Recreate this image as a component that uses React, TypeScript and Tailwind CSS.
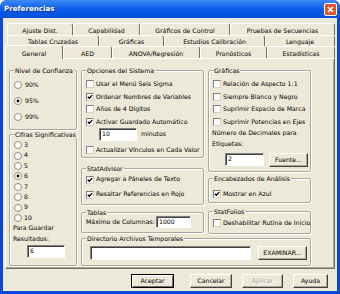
import React from "react";

type TabDef = { label: string; w: string; active?: boolean };

const row1: TabDef[] = [
  { label: "Ajuste Dist.", w: "w-[66px]" },
  { label: "Capabilidad", w: "w-[67px]" },
  { label: "Gráficos de Control", w: "w-[90px]" },
  { label: "Pruebas de Secuencias", w: "w-[105px]" },
];
const row2: TabDef[] = [
  { label: "Tablas Cruzadas", w: "w-[92px]" },
  { label: "Gráficas", w: "w-[65px]" },
  { label: "Estudios Calibración", w: "w-[101px]" },
  { label: "Lenguaje", w: "w-[70px]" },
];
const row3: TabDef[] = [
  { label: "General", w: "w-[58px]", active: true },
  { label: "AED", w: "w-[49px]" },
  { label: "ANOVA/Regresión", w: "w-[88px]" },
  { label: "Pronósticos", w: "w-[67px]" },
  { label: "Estadísticas", w: "w-[68px]" },
];

function Tab({ t }: { t: TabDef }) {
  return (
    <div
      className={`${t.w} flex items-center justify-center pt-[3px] whitespace-nowrap leading-none bg-[#ece9d8] border-t border-l border-white border-r border-r-[#716f64] rounded-t-[3px] ${
        t.active ? "h-[14px] -mb-[1px] relative z-10" : "h-full"
      }`}
    >
      {t.label}
    </div>
  );
}

function Radio({ on }: { on?: boolean }) {
  return (
    <svg width="8" height="8" viewBox="0 0 8 8" className="shrink-0">
      <circle cx="4" cy="4" r="3.5" fill="#fff" stroke="#8d8b80" />
      {on && <circle cx="4" cy="4" r="1.4" fill="#000" />}
    </svg>
  );
}

function Box({ on }: { on?: boolean }) {
  return (
    <span className="relative w-[8px] h-[8px] shrink-0 bg-white border border-t-[#808080] border-l-[#808080] border-r-[#d4d0c8] border-b-[#d4d0c8]">
      {on && (
        <svg className="absolute inset-0" width="6" height="6" viewBox="0 0 6 6">
          <path d="M0.8 2.7 L2.3 4.3 L5.2 1.1" stroke="#000" strokeWidth="1.3" fill="none" />
        </svg>
      )}
    </span>
  );
}

function Opt({ label, on, h = "h-[12.5px]" }: { label: string; on?: boolean; h?: string }) {
  return (
    <div className={`flex items-center gap-[2px] ${h}`}>
      <Box on={on} />
      <span className="whitespace-nowrap leading-none">{label}</span>
    </div>
  );
}

function Field({ value, className }: { value?: string; className: string }) {
  return (
    <div
      className={`bg-white flex items-center pl-[2px] leading-none border border-t-[#808080] border-l-[#808080] border-r-white border-b-white shadow-[inset_1px_1px_0_#404040] ${className}`}
    >
      {value}
    </div>
  );
}

function Btn({
  label,
  className,
  isDefault,
  disabled,
}: {
  label: string;
  className: string;
  isDefault?: boolean;
  disabled?: boolean;
}) {
  return (
    <button
      type="button"
      className={`flex items-center justify-center leading-none bg-[#ece9d8] border ${
        isDefault
          ? "border-black shadow-[inset_1px_1px_0_#fff,inset_-1px_-1px_0_#716f64]"
          : "border-t-white border-l-white border-r-[#404040] border-b-[#404040] shadow-[inset_-1px_-1px_0_#aca899]"
      } ${disabled ? "text-[#aca899] [text-shadow:1px_1px_0_#fff]" : ""} ${className}`}
    >
      {label}
    </button>
  );
}

function Group({
  title,
  className,
  children,
}: {
  title: string;
  className: string;
  children?: React.ReactNode;
}) {
  return (
    <div
      className={`relative border border-[#aca899] rounded-[2px] shadow-[inset_1px_1px_0_#fff,1px_1px_0_#fff] ${className}`}
    >
      <span className="absolute -top-[4px] left-[4px] px-[1px] bg-[#ece9d8] leading-[7px] whitespace-nowrap">
        {title}
      </span>
      {children}
    </div>
  );
}

export default function App() {
  return (
    <div className="w-[340px] h-[294px] flex flex-col bg-[#0a49d8] rounded-t-[7px] overflow-hidden font-['DejaVu_Sans',sans-serif] text-[6.2px] text-black">
      {/* Title bar */}
      <div className="h-[18px] shrink-0 flex items-center justify-between pl-[4px] pr-[3px] bg-linear-to-b from-[#3d8bf5] via-[#0a5ce8] to-[#0550dc]">
        <span className="text-white font-bold text-[7.1px] leading-none [text-shadow:1px_1px_0_#0b2e8a]">
          Preferencias
        </span>
        <div className="w-[13px] h-[13px] rounded-[2px] border border-white bg-[#e0542f] flex items-center justify-center">
          <svg width="7" height="7" viewBox="0 0 7 7">
            <path d="M1 1L6 6M6 1L1 6" stroke="#fff" strokeWidth="1.5" />
          </svg>
        </div>
      </div>

      {/* Dialog body */}
      <div className="flex-1 mx-[3px] mb-[3px] bg-[#ece9d8] pt-[5px] flex flex-col">
        {/* Tab rows */}
        <div className="flex h-[12px] ml-[4px]">
          {row1.map((t) => (
            <Tab key={t.label} t={t} />
          ))}
        </div>
        <div className="flex h-[11px] ml-[4px]">
          {row2.map((t) => (
            <Tab key={t.label} t={t} />
          ))}
        </div>
        <div className="flex items-end h-[12px] ml-[2px]">
          {row3.map((t) => (
            <Tab key={t.label} t={t} />
          ))}
        </div>

        {/* Tab panel */}
        <div className="ml-[2px] w-[330px] h-[211px] pl-[3px] pt-[11px] flex gap-[4px] border border-t-white border-l-white border-r-[#716f64] border-b-[#716f64] shadow-[inset_-1px_-1px_0_#aca899]">
          {/* Left column */}
          <div className="w-[68px] flex flex-col">
            <Group title="Nivel de Confianza" className="h-[60px] pt-[6px] pl-[4px]">
              {["90%", "95%", "99%"].map((v) => (
                <div key={v} className="flex items-center gap-[3px] h-[16px]">
                  <Radio on={v === "95%"} />
                  <span className="leading-none">{v}</span>
                </div>
              ))}
            </Group>
            <Group title="Cifras Significativas" className="mt-[4px] h-[132px] pt-[5px] pl-[4px]">
              {["3", "4", "5", "6", "7", "8", "9", "10"].map((v) => (
                <div key={v} className="flex items-center gap-[2px] h-[10.4px]">
                  <Radio on={v === "6"} />
                  <span className="leading-none">{v}</span>
                </div>
              ))}
              <div className="h-[10.4px] -ml-[1px] flex items-center leading-none">Para Guardar</div>
              <div className="h-[10.4px] -ml-[1px] flex items-center leading-none">Resultados:</div>
              <Field value="6" className="mt-[1px] ml-[13px] w-[38px] h-[13px]" />
            </Group>
          </div>

          {/* Middle + right columns */}
          <div className="w-[230px] flex flex-col">
            <div className="h-[164px] flex gap-[4px] items-start">
              <div className="w-[123px] flex flex-col">
                <Group title="Opciones del Sistema" className="h-[88px] pt-[7px] pl-[4px]">
                  <Opt label="Usar el Menú Seis Sigma" />
                  <Opt label="Ordenar Nombres de Variables" on />
                  <Opt label="Años de 4 Dígitos" />
                  <Opt label="Activar Guardado Automático" on />
                  <div className="flex items-center h-[13px]">
                    <Field value="10" className="ml-[13px] w-[38px] h-[13px]" />
                    <span className="ml-[4px] leading-none">minutos</span>
                  </div>
                  <Opt label="Actualizar Vínculos en Cada Valor" h="h-[12px] mt-[3px]" />
                </Group>
                <Group title="StatAdvisor" className="mt-[10px] h-[37px] pt-[3px] pl-[4px]">
                  <Opt label="Agregar a Páneles de Texto" on h="h-[15px]" />
                  <Opt label="Resaltar Referencias en Rojo" on h="h-[15px]" />
                </Group>
                <Group title="Tablas" className="mt-[7px] h-[21px] pt-[3px] pl-[4px]">
                  <div className="flex items-center h-[12px]">
                    <span className="w-[70px] leading-none whitespace-nowrap">Máximo de Columnas:</span>
                    <Field value="1000" className="w-[35px] h-[12px]" />
                  </div>
                </Group>
              </div>

              <div className="w-[103px] flex flex-col">
                <Group title="Gráficas" className="h-[102px] pt-[7px] pl-[4px]">
                  <Opt label="Relación de Aspecto 1:1" />
                  <Opt label="Siempre Blanco y Negro" />
                  <Opt label="Suprimir Espacio de Marca" />
                  <Opt label="Suprimir Potencias en Ejes" />
                  <div className="h-[11px] -ml-[1px] flex items-center leading-none whitespace-nowrap">
                    Número de Decimales para
                  </div>
                  <div className="h-[11px] -ml-[1px] flex items-center leading-none">Etiquetas:</div>
                  <div className="mt-[3px] flex items-start h-[14px]">
                    <Field value="2" className="ml-[12px] w-[39px] h-[13px]" />
                    <Btn label="Fuente..." className="ml-[5px] w-[39px] h-[14px]" />
                  </div>
                </Group>
                <Group title="Encabezados de Análisis" className="mt-[6px] h-[25px] pt-[9px] pl-[4px]">
                  <Opt label="Mostrar en Azul" on h="h-[12px]" />
                </Group>
                <Group title="StatFolios" className="mt-[8px] h-[23px] pt-[5px] pl-[4px]">
                  <Opt label="Deshabilitar Rutina de Inicio" h="h-[12px]" />
                </Group>
              </div>
            </div>

            <Group title="Directorio Archivos Temporales" className="mt-[4px] h-[28px] pt-[7px] pl-[8px]">
              <div className="flex items-center">
                <Field className="w-[161px] h-[14px]" />
                <Btn label="EXAMINAR..." className="ml-[7px] w-[49px] h-[14px]" />
              </div>
            </Group>
          </div>
        </div>

        {/* Dialog buttons */}
        <div className="mt-[5px] ml-[128px] flex h-[14px]">
          <Btn label="Aceptar" isDefault className="w-[43px] h-[14px]" />
          <Btn label="Cancelar" className="ml-[16px] w-[42px] h-[14px]" />
          <Btn label="Aplicar" disabled className="ml-[10px] w-[41px] h-[14px]" />
          <Btn label="Ayuda" className="ml-[10px] w-[35px] h-[14px]" />
        </div>
      </div>
    </div>
  );
}
